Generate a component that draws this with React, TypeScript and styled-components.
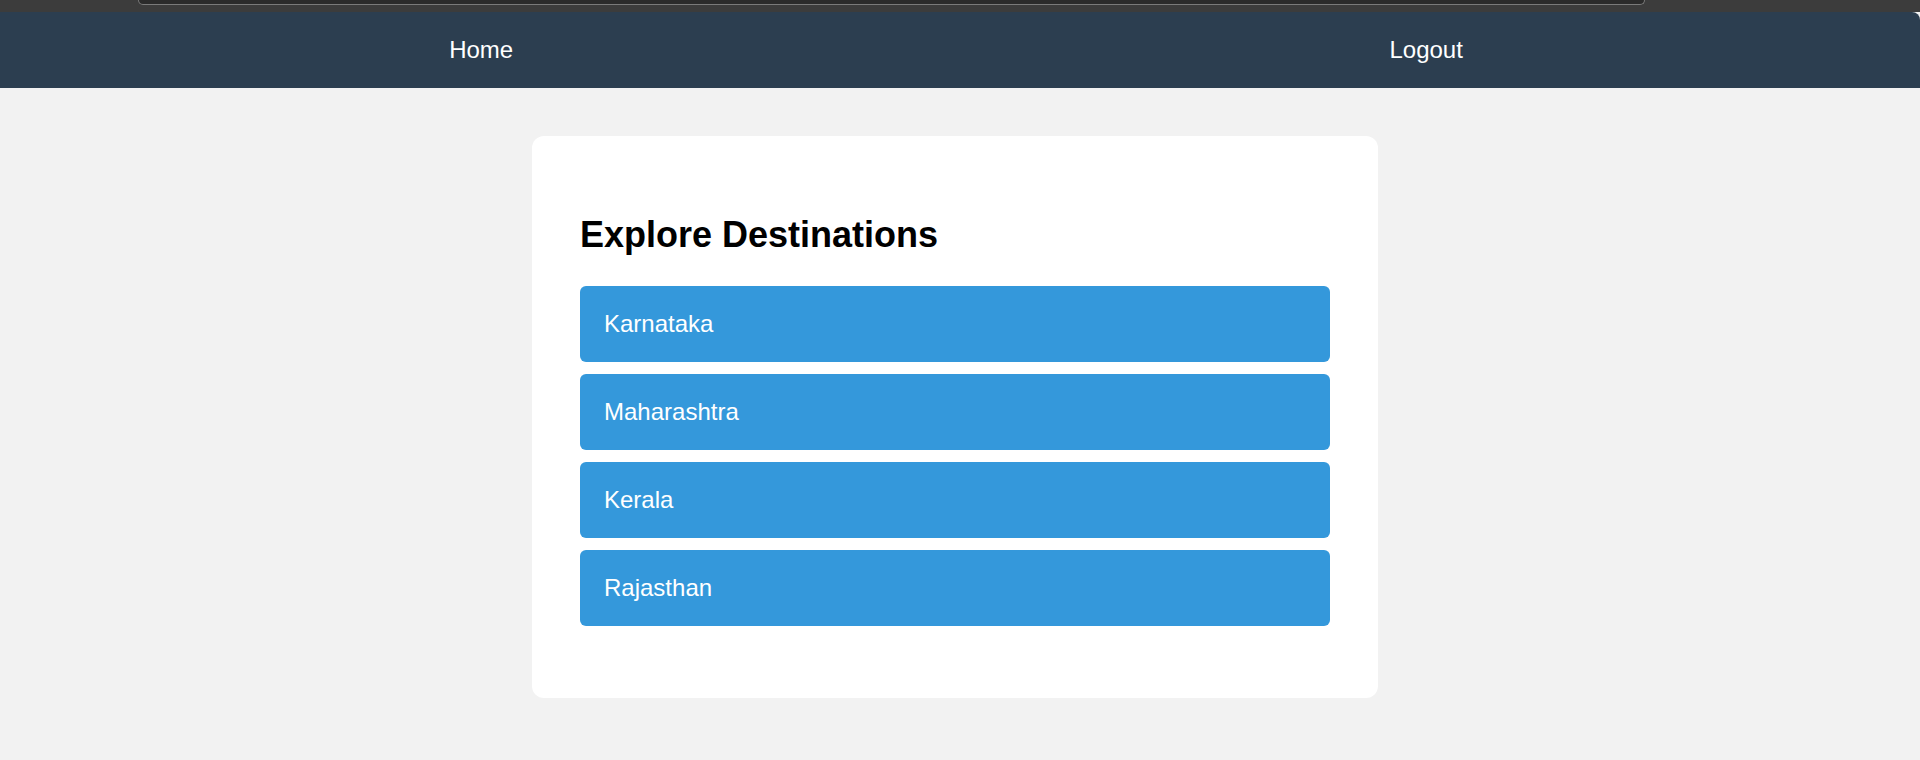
import { FC } from "react";
import styled, { createGlobalStyle } from "styled-components";

const GlobalStyle = createGlobalStyle`
  html, body {
    margin: 0;
    padding: 0;
    background-color: #f2f2f2;
    font-family: "Liberation Sans", Arial, sans-serif;
  }
`;

const destinations = ["Karnataka", "Maharashtra", "Kerala", "Rajasthan"];

const App: FC = () => {
  return (
    <>
      <GlobalStyle />
      <ChromeStrip>
        <AddressBar />
      </ChromeStrip>
      <NavBar>
        <NavLink href="#">Home</NavLink>
        <NavLink href="#">Logout</NavLink>
      </NavBar>
      <Main>
        <Card>
          <Title>Explore Destinations</Title>
          <List>
            {destinations.map((name) => (
              <Item key={name}>{name}</Item>
            ))}
          </List>
        </Card>
      </Main>
    </>
  );
};

const ChromeStrip = styled.div`
  display: flex;
  height: 12px;
  padding-left: 138px;
  background-color: #3c3c3c;
`;

const AddressBar = styled.div`
  width: 1505px;
  height: 4px;
  background-color: #2b2b2b;
  border: 1px solid #7a7a7a;
  border-top: none;
  border-radius: 0 0 10px 10px;
`;

const NavBar = styled.nav`
  display: flex;
  justify-content: space-around;
  align-items: center;
  padding: 24px 19px 24px 11px;
  background-color: #2c3e50;
  border-top-right-radius: 8px;
`;

const NavLink = styled.a`
  color: #ffffff;
  font-size: 24px;
  line-height: normal;
  text-decoration: none;
`;

const Main = styled.main`
  display: flex;
  justify-content: center;
  padding: 48px 20px 48px 10px;
`;

const Card = styled.section`
  box-sizing: border-box;
  width: 846px;
  padding: 48px;
  background-color: #ffffff;
  border-radius: 12px;
`;

const Title = styled.h2`
  margin: 30px 0;
  font-size: 36px;
  font-weight: 700;
  line-height: normal;
  color: #000000;
`;

const List = styled.ul`
  display: flex;
  flex-direction: column;
  gap: 12px;
  margin: 0 0 24px;
  padding: 0;
  list-style: none;
`;

const Item = styled.li`
  padding: 24px;
  background-color: #3498db;
  color: #ffffff;
  font-size: 24px;
  line-height: normal;
  border-radius: 6px;
  cursor: pointer;
`;

export default App;
